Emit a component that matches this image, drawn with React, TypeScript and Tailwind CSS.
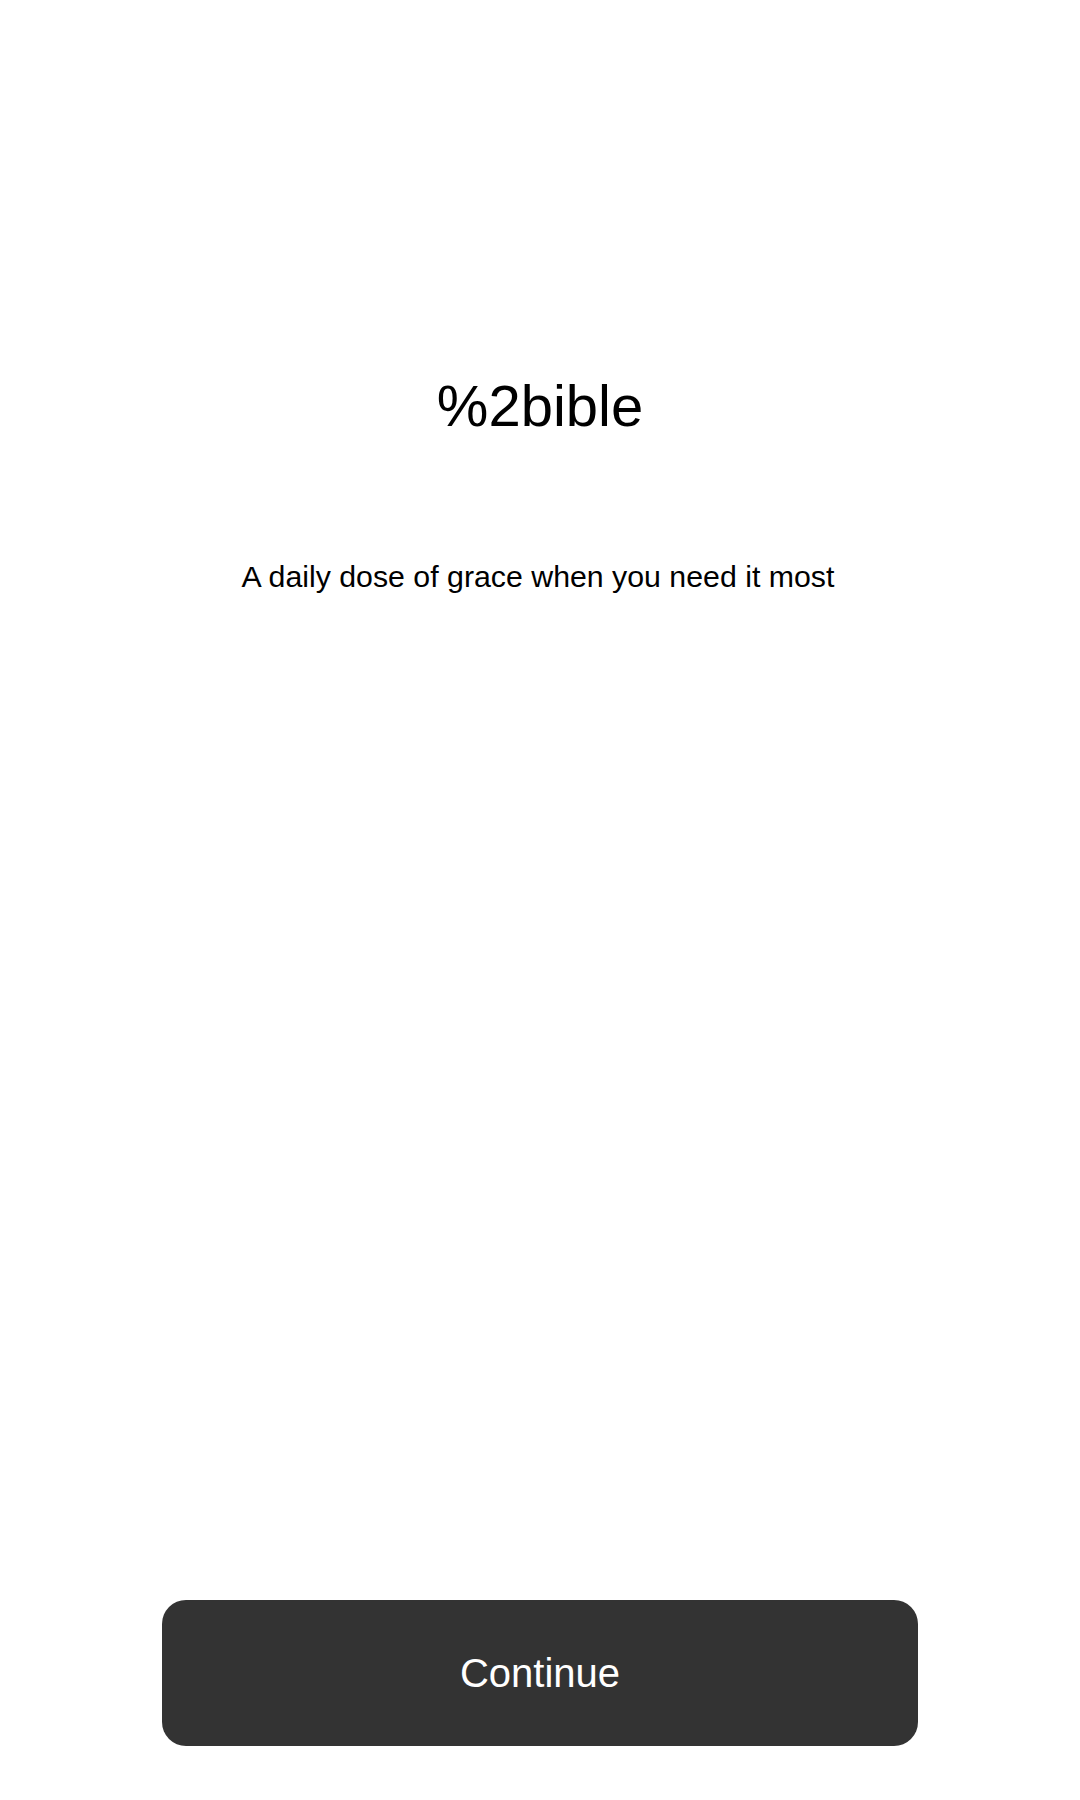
import React from 'react';

const App = () => {
  return (
    <div
      className="min-h-[1800px] w-full bg-white flex flex-col items-center text-black"
      style={{ fontFamily: '"Liberation Sans", Arial, sans-serif' }}
    >
      {/* Title */}
      <h1 className="mt-[374px] text-[58px] leading-[64px] font-normal">%2bible</h1>

      {/* Tagline */}
      <p className="mt-[121px] pr-[4px] text-[30.3px] leading-[36px]">
        A daily dose of grace when you need it most
      </p>

      <div className="flex-1" />

      {/* Continue */}
      <button className="mb-[54px] w-[756px] h-[146px] rounded-[24px] bg-[#333333] text-white text-[40px] leading-none flex items-center justify-center">
        Continue
      </button>
    </div>
  );
};

export default App;
